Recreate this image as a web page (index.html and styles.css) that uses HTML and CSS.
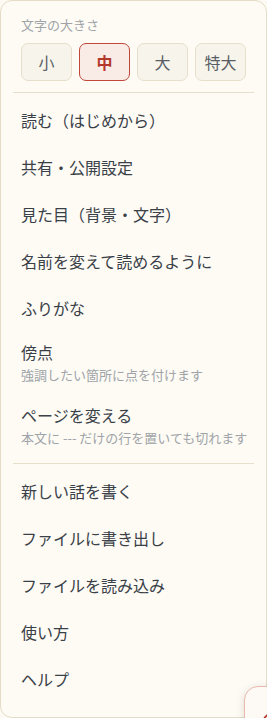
FILE: index.html
```html
<!DOCTYPE html>
<html lang="ja">
<head>
    <meta charset="UTF-8">
    <meta name="viewport" content="width=device-width, initial-scale=1.0">
    <title>メニュー</title>
    <link rel="stylesheet" href="styles.css">
</head>
<body>
    <div class="menu">
        <div class="size-section">
            <div class="size-label">文字の大きさ</div>
            <div class="size-buttons">
                <button class="size-btn">小</button>
                <button class="size-btn active">中</button>
                <button class="size-btn">大</button>
                <button class="size-btn">特大</button>
            </div>
        </div>

        <div class="divider"></div>

        <ul class="menu-list">
            <li class="menu-item">読む（はじめから）</li>
            <li class="menu-item">共有・公開設定</li>
            <li class="menu-item">見た目（背景・文字）</li>
            <li class="menu-item">名前を変えて読めるように</li>
            <li class="menu-item">ふりがな</li>
            <li class="menu-item with-sub">
                <span class="item-title">傍点</span>
                <span class="item-sub">強調したい箇所に点を付けます</span>
            </li>
            <li class="menu-item with-sub">
                <span class="item-title">ページを変える</span>
                <span class="item-sub">本文に --- だけの行を置いても切れます</span>
            </li>
        </ul>

        <div class="divider"></div>

        <ul class="menu-list">
            <li class="menu-item">新しい話を書く</li>
            <li class="menu-item">ファイルに書き出し</li>
            <li class="menu-item">ファイルを読み込み</li>
            <li class="menu-item">使い方</li>
            <li class="menu-item">ヘルプ</li>
        </ul>
    </div>

    <!-- floating write button, mostly off screen -->
    <button class="fab" aria-label="書く">
        <svg width="22" height="22" viewBox="0 0 24 24" fill="none" stroke="#b8392c" stroke-width="2" stroke-linecap="round" stroke-linejoin="round">
            <path d="M16.5 3.5a2.1 2.1 0 0 1 3 3L7 19l-4 1 1-4z"/>
        </svg>
    </button>
</body>
</html>
```

FILE: styles.css
```css
body {
    margin: 0;
    padding: 0;
    font-family: "Noto Sans CJK JP", "Noto Sans", sans-serif;
    background: #fcfaf3;
    color: #343a42;
    overflow: hidden;
}
.menu {
    box-sizing: border-box;
    width: 100%;
    height: 100vh;
    padding: 12px;
    background: #fdfbf4;
    border: 1px solid #e4dcc6;
    border-radius: 12px;
    overflow: hidden;
}
.size-section {
    padding: 4px 8px 11px;
}
.size-label {
    font-size: 13px;
    line-height: 16px;
    color: #a0a4a9;
    margin-bottom: 10px;
}
.size-buttons {
    display: grid;
    grid-template-columns: repeat(4, 1fr);
    gap: 7px;
}
.size-btn {
    height: 38px;
    padding: 0;
    font-family: inherit;
    font-size: 16px;
    color: #5a5f66;
    background: #f6f4eb;
    border: 1px solid #e6dfcc;
    border-radius: 7px;
}
.size-btn.active {
    color: #b3382b;
    font-weight: bold;
    background: #f9ebe5;
    border-color: #c0473a;
}
.divider {
    height: 1px;
    background: #e6dfcc;
    margin: 0 0 4px;
}
.menu-list + .divider {
    margin-top: 5px;
}
.menu-list {
    list-style: none;
    margin: 0;
    padding: 0;
}
.menu-item {
    padding: 13px 8px;
    font-size: 16px;
    line-height: 21px;
    color: #3a4048;
    white-space: nowrap;
}
.menu-item.with-sub {
    display: flex;
    flex-direction: column;
    padding: 10px 8px;
}
.item-sub {
    margin-top: 2px;
    font-size: 13px;
    line-height: 20px;
    color: #a0a4a9;
}
.fab {
    position: fixed;
    right: -33px;
    bottom: -24px;
    width: 56px;
    height: 56px;
    padding: 0;
    display: flex;
    align-items: center;
    justify-content: center;
    background: #fdf9f4;
    border: 1px solid #e9b9ae;
    border-radius: 14px;
    box-shadow: 0 2px 10px rgba(0, 0, 0, 0.12);
}
```
